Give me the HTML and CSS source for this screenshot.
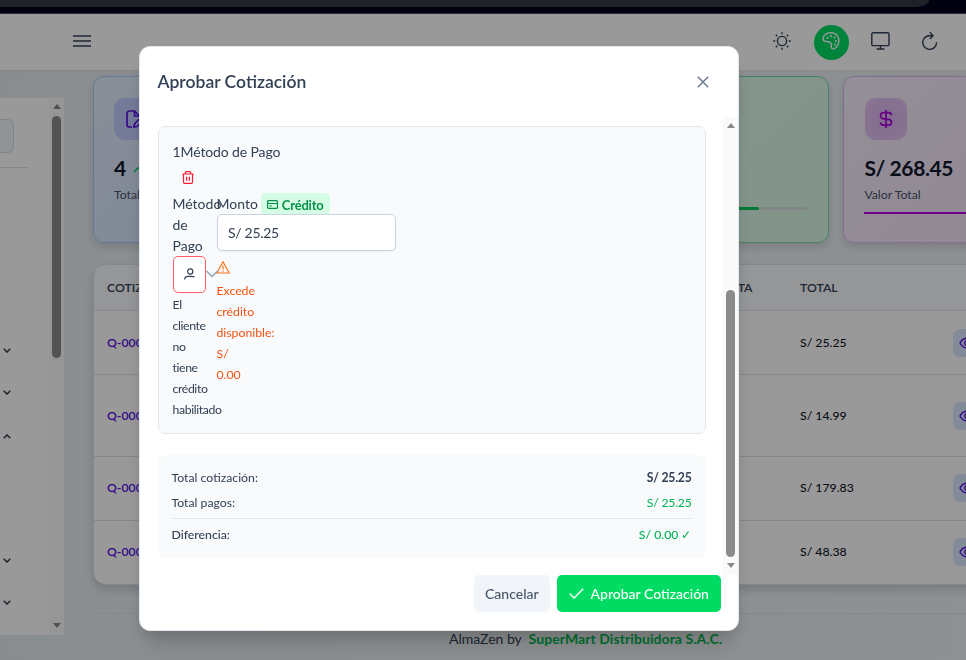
FILE: index.html
```html
<!DOCTYPE html>
<html lang="es">
<head>
<meta charset="utf-8">
<title>AlmaZen</title>
<link rel="stylesheet" href="styles.css">
</head>
<body>
<div class="app">
  <div class="banner"><div class="banner-pill"></div></div>
  <header class="topbar">
    <svg class="burger" width="18" height="14" viewBox="0 0 18 14"><path d="M0 2h18M0 7h18M0 12h18"/></svg>
    <div class="tools">
      <svg class="tool" width="18" height="18" viewBox="0 0 18 18"><circle cx="9" cy="9" r="4.600"/><path d="M9 .3v2M9 15.700v2M.3 9h2M15.700 9h2M2.800 2.800l1.400 1.400M13.800 13.800l1.400 1.400M2.800 15.200l1.400-1.400M13.800 4.200l1.400-1.400"/></svg>
      <span class="palette"><svg width="18" height="18" viewBox="0 0 18 18"><path d="M9.300 .8C4.700 .6 1 3.300 1 6.800c0 2 1.500 2.600 3 2.700 2.300 .1 4.500 .1 5.200 2.500 .5 1.900-.6 3.700 .9 4.600 1.500 .8 3.800-.6 5-2.500C19.400 7.900 15.500 1.100 9.300 .8z"/><g class="dots"><circle cx="5.500" cy="5.800" r="1.100"/><circle cx="9" cy="4.100" r="1.100"/><circle cx="12.500" cy="5.500" r="1.100"/><circle cx="13.900" cy="9" r="1.100"/><circle cx="12.800" cy="12.600" r="1.100"/></g></svg></span>
      <svg class="tool" width="19" height="18" viewBox="0 0 19 18"><rect x=".8" y=".8" width="17.200" height="12.800" rx="1.200"/><path d="M9.500 13.600V17M5.600 17h7.800"/></svg>
      <svg class="tool" width="16" height="19" viewBox="0 0 16 19"><path d="M1.900 7.700A6.900 6.900 0 1 0 14.600 11.200M1.900 7.700C3.100 5.700 5 4.700 7.400 4.700h3.400M7.800 1.300l3.200 3.400-3.200 3.200"/></svg>
    </div>
  </header>
  <div class="body">
    <aside class="sidebar">
      <div class="menu">
        <div class="search"></div>
        <div class="rule"></div>
        <svg class="chev c1" width="8" height="5" viewBox="0 0 8 5"><path d="M.7 .8L4 4 7.300 .8"/></svg>
        <svg class="chev c2" width="8" height="5" viewBox="0 0 8 5"><path d="M.7 .8L4 4 7.300 .8"/></svg>
        <svg class="chev c3" width="8" height="5" viewBox="0 0 8 5"><path d="M.7 4.200L4 1 7.300 4.200"/></svg>
        <svg class="chev c4" width="8" height="5" viewBox="0 0 8 5"><path d="M.7 .8L4 4 7.300 .8"/></svg>
        <svg class="chev c5" width="8" height="5" viewBox="0 0 8 5"><path d="M.7 .8L4 4 7.300 .8"/></svg>
      </div>
      <div class="scroll side-scroll"><i class="up"></i><i class="thumb"></i><i class="down"></i></div>
    </aside>
    <main class="main">
      <section class="cards">
        <article class="card blue">
          <div class="icon"><svg width="20" height="20" viewBox="0 0 20 20"><path d="M7 18H4.500A2.500 2.500 0 0 1 2 15.500v-11A2.500 2.500 0 0 1 4.500 2h5l5 5M9.500 2v5h5M9 18l.5-3 6.500-6.500 2.500 2.500L12 17.500z"/></svg></div>
          <div class="value">4 <svg width="14" height="10" viewBox="0 0 14 10"><path d="M1 9l4-4 3 2 5-6"/></svg></div>
          <div class="label">Total</div>
        </article>
        <article class="card"></article>
        <article class="card green"><div class="bar"><i></i></div></article>
        <article class="card purple">
          <div class="icon"><svg width="14" height="20" viewBox="0 0 14 20"><path d="M7 1v18M12.300 6.200C12.300 4.500 11 3.700 9.600 3.700H4.600C2.800 3.700 1.600 4.900 1.600 6.600S2.800 9.600 4.600 9.800l5 .5c1.600 .2 2.900 1.200 2.900 3s-1.300 2.900-2.900 2.900H4.400c-1.600 0-2.900-.8-2.900-2.600"/></svg></div>
          <div class="value">S/ 268.45</div>
          <div class="label">Valor Total</div>
          <div class="line"></div>
        </article>
      </section>
      <section class="table">
        <div class="row head"><span>COTIZACIÓN</span><span class="sale">VENTA</span><span>TOTAL</span></div>
        <div class="row"><b>Q-0004</b><span></span><span>S/ 25.25</span><em><svg width="16" height="12" viewBox="0 0 16 12"><path d="M1 6c3.500-6.500 10.500-6.500 14 0-3.500 6.500-10.500 6.500-14 0z"/><circle cx="8" cy="6" r="2.300"/></svg></em></div>
        <div class="row tall"><b>Q-0003</b><span></span><span>S/ 14.99</span><em><svg width="16" height="12" viewBox="0 0 16 12"><path d="M1 6c3.500-6.500 10.500-6.500 14 0-3.500 6.500-10.500 6.500-14 0z"/><circle cx="8" cy="6" r="2.300"/></svg></em></div>
        <div class="row low"><b>Q-0002</b><span></span><span>S/ 179.83</span><em><svg width="16" height="12" viewBox="0 0 16 12"><path d="M1 6c3.500-6.500 10.500-6.500 14 0-3.500 6.500-10.500 6.500-14 0z"/><circle cx="8" cy="6" r="2.300"/></svg></em></div>
        <div class="row low"><b>Q-0001</b><span></span><span>S/ 48.38</span><em><svg width="16" height="12" viewBox="0 0 16 12"><path d="M1 6c3.500-6.500 10.500-6.500 14 0-3.500 6.500-10.500 6.500-14 0z"/><circle cx="8" cy="6" r="2.300"/></svg></em></div>
      </section>
      <footer class="foot">AlmaZen by <strong>SuperMart Distribuidora S.A.C.</strong></footer>
    </main>
  </div>
</div>
<div class="mask">
  <div class="dialog">
    <div class="dialog-head"><h1>Aprobar Cotización</h1><svg width="12" height="12" viewBox="0 0 12 12"><path d="M.8 .8l10.400 10.400M11.200 .8L.8 11.200"/></svg></div>
    <div class="dialog-body">
      <div class="content">
        <section class="method">
          <div class="title">1Método de Pago</div>
          <div class="trash"><svg width="12" height="13" viewBox="0 0 12 13"><path d="M.3 3h11.400M3.400 3V1.700C3.400 1 3.800 .6 4.400 .6h3.200c.6 0 1 .4 1 1.100V3M1.500 3v8c0 .9 .5 1.400 1.300 1.400h6.400c.8 0 1.300-.5 1.300-1.400V3M4.600 5.800v4M7.400 5.800v4"/></svg></div>
          <div class="fields">
            <div class="pay">
              <div>Método de Pago</div>
              <div class="select"><svg class="person" width="11" height="12" viewBox="0 0 11 12"><circle cx="6.200" cy="3.500" r="2.600"/><path d="M.5 11.500C.8 9.400 2.300 8.400 4.200 8.400h3.600c1.300 0 2.300 .2 2.700 .9"/></svg></div>
              <svg class="arrow" width="12" height="8" viewBox="0 0 12 8"><path d="M.5 1L6 6.500 11.500 1"/></svg>
              <div class="hint">El cliente no tiene crédito habilitado</div>
            </div>
            <div class="amount">
              <div class="amount-label">Monto <span class="tag"><svg width="11" height="9" viewBox="0 0 11 9"><path d="M.6 1.600C.6 1 1 .6 1.600 .6h7.800c.6 0 1 .4 1 1v5.800c0 .6-.4 1-1 1H1.600c-.6 0-1-.4-1-1zM.6 3.500h9.800M2.300 6h2.500"/></svg>Crédito</span></div>
              <div class="input">S/ 25.25</div>
              <div class="warn"><svg width="14" height="13" viewBox="0 0 14 13"><path d="M7 .8L13.200 12H.8zM7 4.500v4M7 9.500v1.200"/></svg><p>Excede crédito disponible: S/ 0.00</p></div>
            </div>
          </div>
        </section>
        <section class="summary">
          <div class="sum"><span>Total cotización:</span><strong>S/ 25.25</strong></div>
          <div class="sum"><span>Total pagos:</span><span class="ok paid">S/ 25.25</span></div>
          <div class="sum diff"><span>Diferencia:</span><span class="ok">S/ 0.00 ✓</span></div>
        </section>
      </div>
      <div class="scroll dialog-scroll"><i class="up"></i><i class="thumb"></i><i class="down"></i></div>
    </div>
    <div class="dialog-foot">
      <button class="cancel">Cancelar</button>
      <button class="approve"><svg width="15" height="11" viewBox="0 0 15 11"><path d="M.8 5.700l4.300 4.300L14.200 .8"/></svg>Aprobar Cotización</button>
    </div>
  </div>
</div>
</body>
</html>
```
FILE: styles.css
```css
* { box-sizing: border-box; }
body { margin: 0; height: 660px; overflow: hidden; font: 14px/21px Lato, sans-serif; color: #334155; }
svg { fill: none; stroke: currentColor; stroke-width: 1.4; display: block; flex: none; }
.app { height: 660px; background: linear-gradient(90deg, #e4ecf0, #e9eff2 20%, #edf1f4); overflow: hidden; }
.banner { height: 14px; background: #03031a; border-bottom: 1px solid #4a4a62; }
.banner-pill { width: 929px; height: 7px; background: #343945; border-bottom-right-radius: 14px 7px; }
.topbar { height: 56px; background: #fff; display: flex; align-items: center; justify-content: space-between; padding: 0 28.500px 2px 73px; box-shadow: 0 1px 3px rgba(0,0,0,.06); }
.burger { stroke-width: 1.7; }
.tools { display: flex; align-items: center; gap: 22px; }
.tool { margin-bottom: 1px; }
.tool:last-child { margin-left: 10px; }
.palette { width: 35px; height: 35px; border-radius: 50%; background: #00db63; color: #fff; display: grid; place-items: center; margin: 2px 0 0 1px; padding-bottom: 2px; }
.dots { fill: #fff; stroke: none; }
.body { display: flex; align-items: flex-start; }
.sidebar { width: 64px; height: 537px; margin-top: 28px; background: #fff; display: flex; flex: none; }
.menu { width: 49px; display: flex; flex-direction: column; }
.search { width: 14px; height: 34px; margin-top: 21px; border: 1px solid #d4dce7; border-left: 0; border-radius: 0 6px 6px 0; background: #f0f5f9; }
.rule { width: 28px; height: 1px; margin: 14px 0 0; background: #dfe3e9; }
.chev { margin-left: 3px; stroke-width: 1.600; }
.c1 { margin-top: 180px; } .c2 { margin-top: 37px; } .c3 { margin-top: 39px; } .c4 { margin-top: 119px; } .c5 { margin-top: 37px; }
.scroll { width: 15px; background: #fafafa; display: flex; flex-direction: column; align-items: center; padding: 6px 0; flex: none; }
.up, .down { border: 4.5px solid transparent; border-top: 0; border-bottom: 5px solid #888; }
.down { border-bottom: 0; border-top: 5px solid #888; margin-top: auto; }
.thumb { width: 9px; border-radius: 5px; background: #8b8b8b; }
.side-scroll .thumb { height: 242px; margin-top: 7px; }
.side-scroll { padding-bottom: 7px; }
.main { width: 986.500px; margin: 6px 0 0 28.500px; flex: none; }
.cards { display: flex; gap: 14px; }
.card { width: 236.200px; height: 167px; padding: 21px 20.500px; border: 1px solid #b6d4fb; border-radius: 11px; box-shadow: 0 4px 8px rgba(15,23,42,.14); background: #eff5ff; }
.blue { border-color: #a8caf8; background: linear-gradient(135deg, #e5effd, #cbdcfd); }
.green { border-color: #73d9a5; background: linear-gradient(135deg, #def8e9, #d9f8e5); padding: 130px 21px 0; }
.purple { border-color: #dbb7eb; background: linear-gradient(135deg, #f5effb, #f4dff8); }
.icon { width: 42px; height: 42px; border-radius: 11px; display: grid; place-items: center; color: #5a12e4; background: #c2cdfd; }
.icon svg { stroke-width: 1.700; }
.purple .icon { margin-left: .5px; color: #a900dc; background: radial-gradient(#dcb3ee, #e5c4f4); }
.value { margin-top: 13px; font-size: 21px; letter-spacing: -.4px; line-height: 29px; font-weight: 700; color: #0f172a; display: flex; align-items: center; gap: 7px; white-space: nowrap; }
.value svg { color: #00c95b; }
.label { font-size: 12.25px; line-height: 17px; margin-top: 4px; color: #475569; }
.line { height: 2px; background: #b900df; margin-top: 9px; }
.bar { width: 192px; height: 3px; border-radius: 2px; background: #d7dfdf; }
.bar i { display: block; width: 144px; height: 3px; border-radius: 2px; background: #00cc5c; }
.table { margin-top: 21px; border: 1px solid #dce2e8; border-radius: 13px; background: #fff; overflow: hidden; box-shadow: 0 5px 9px rgba(15,23,42,.16); font-size: 12.25px; color: #0f172a; }
.row { height: 64px; display: grid; grid-template-columns: 200px 493px 152.500px 28px; padding-left: 13.500px; align-items: center; border-bottom: 1px solid #dfe3e9; font-weight: 500; }
.row.tall { height: 82px; }
.row.low { padding-bottom: 2px; }
.row:last-child { border: 0; height: 63px; }
.row.head { height: 46px; background: #f8fafc; color: #334155; font-weight: 600; }
.sale { text-align: right; padding-right: 47.500px; }
.row b { color: #5a12e4; font-weight: 600; }
.row em { width: 28px; height: 28px; border-radius: 7px; background: #dbe8fe; color: #5a12e4; display: grid; place-items: center; }
.foot { margin-top: 28px; border-top: 1px solid #dce2e8; padding: 14px 0 0 356.500px; white-space: nowrap; font-size: 14px; }
.foot strong { color: #00ba50; margin-left: 3.500px; letter-spacing: .07px; }
.mask { position: fixed; inset: 0; background: rgba(0,0,0,.4); }
.dialog { width: 600px; height: 585px; margin: 46px 0 0 139px; border: 1px solid #e2e8f0; border-radius: 11px; background: #fff; box-shadow: 0 20px 25px -5px rgba(0,0,0,.14), 0 8px 14px -4px rgba(0,0,0,.12); display: flex; flex-direction: column; }
.dialog-head { height: 70px; padding: 0 29px 0 17.500px; display: flex; align-items: center; justify-content: space-between; flex: none; color: #64748b; }
.dialog-head h1 { margin: -2px 0 0; font-size: 17.500px; font-weight: 600; color: #334155; }
.dialog-body { height: 458px; display: flex; justify-content: space-between; flex: none; }
.content { width: 567px; padding: 9px 0 0 18px; }
.method { width: 548px; height: 308px; background: #f8fafc; border: 1px solid #e2e8f0; border-radius: 7px; padding: 14px 13.500px 0; }
.title { letter-spacing: -.12px; }
.trash { height: 31px; padding: 9px 0 0 9.500px; color: #fb1b35; }
.trash svg { stroke-width: 1.2; }
.fields { display: flex; gap: 11px; }
.pay { width: 33px; position: relative; flex: none; }
.select { height: 37px; border: 1px solid #ff5a65; border-radius: 5px; background: #fff; display: flex; align-items: center; padding: 0 0 2px 10.500px; }
.select svg, .tag svg { stroke-width: 1.200; }
.arrow { position: absolute; left: 33px; top: 77px; color: #94a3b8; }
.hint { font-size: 12.25px; letter-spacing: -.38px; margin-top: 1px; }
.amount-label { height: 21px; display: flex; gap: 3px; }
.tag { height: 23px; background: #d5fde6; border-radius: 5px; color: #069148; font-weight: 700; font-size: 13px; letter-spacing: -.2px; line-height: 24px; padding: 0 6px; display: flex; align-items: center; gap: 4px; }
.input { position: relative; width: 179px; height: 37px; border: 1px solid #cbd5e1; border-radius: 5px; background: #fff; padding: 0 10.500px; line-height: 36px; letter-spacing: -.3px; box-shadow: 0 1px 2px rgba(18,18,23,.05); }
.warn { width: 30px; color: #f97316; padding-top: 10px; font-size: 12.25px; }
.warn p { margin: 6px 0 0; color: #fa5211; }
.warn svg { stroke-width: 1.2; margin-left: -.5px; }
.summary { width: 548px; height: 103px; margin-top: 21px; border-radius: 7px; background: #f8fafc; padding: 12px 14.500px 12px 13.500px; font-size: 12.25px; }
.sum { height: 25px; display: flex; justify-content: space-between; }
.sum strong { font-weight: 700; letter-spacing: -.25px; }
.sum .ok { color: #00b251; }
.sum .paid { letter-spacing: -.25px; }
.sum.diff { border-top: 1px solid #e2e8f0; margin-top: 1px; padding-top: 5px; height: 32px; }
.diff span { font-weight: 500; }
.dialog-scroll .thumb { height: 267px; margin-top: 162px; }
.dialog-scroll { padding-bottom: 7px; }
.dialog-foot { display: flex; justify-content: flex-end; gap: 7px; padding-right: 17px; }
button { height: 37px; border: 0; border-radius: 5px; font: 500 14px Lato, sans-serif; display: flex; align-items: center; padding: 0 11px; }
.cancel { width: 76px; background: #f1f5f9; color: #475569; }
.approve { width: 164px; background: #00db63; color: #fff; gap: 7px; white-space: nowrap; padding: 0 11.500px; }
```
